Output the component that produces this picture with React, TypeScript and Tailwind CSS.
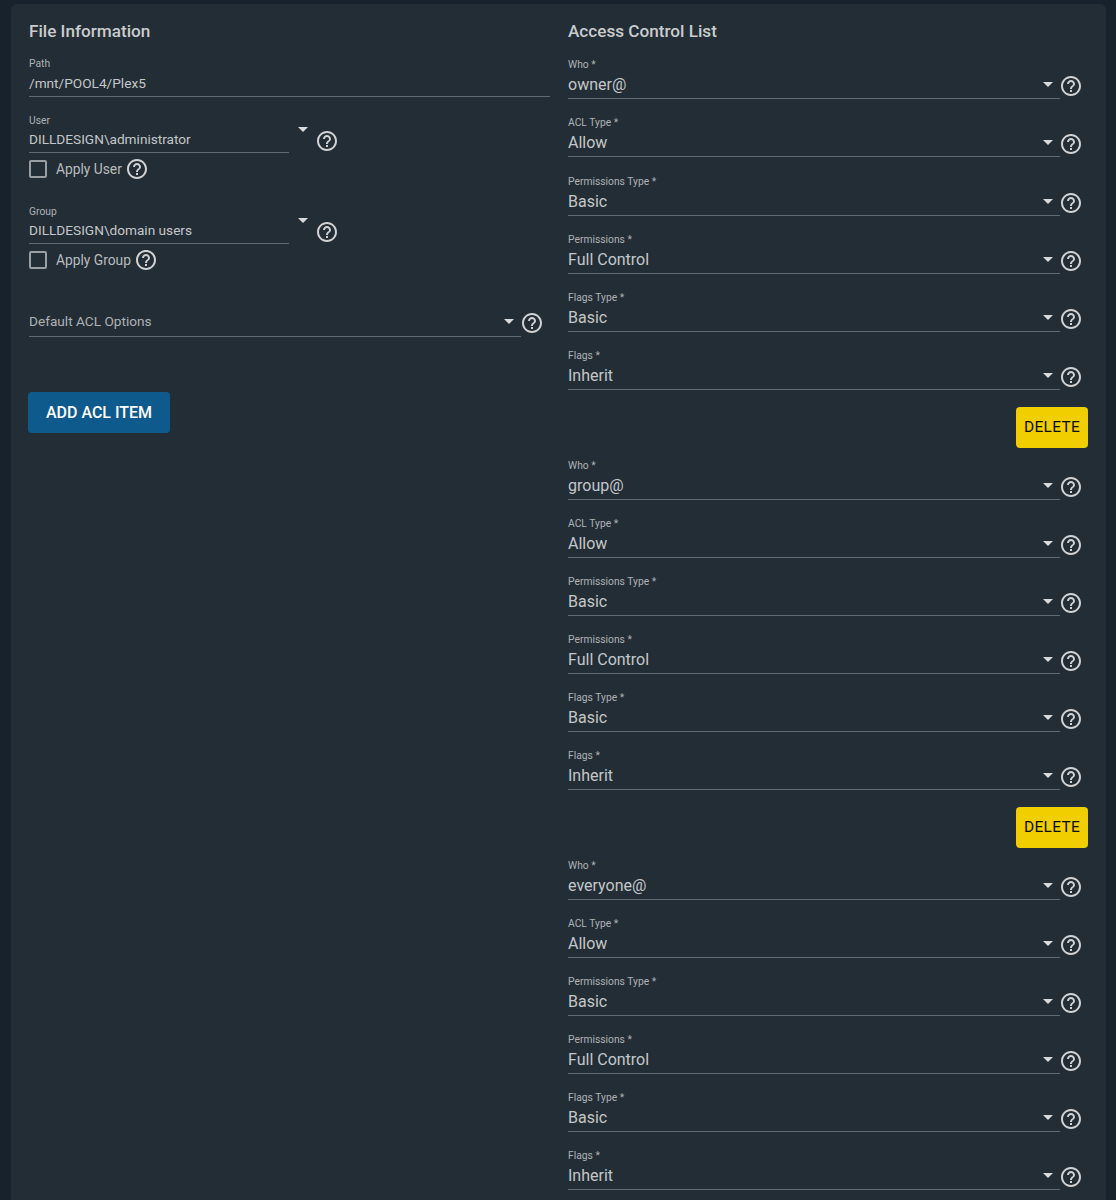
const HELP = "M11 18h2v-2h-2v2zm1-16C6.48 2 2 6.48 2 12s4.48 10 10 10 10-4.48 10-10S17.52 2 12 2zm0 18c-4.41 0-8-3.59-8-8s3.59-8 8-8 8 3.59 8 8-3.59 8-8 8zm0-14c-2.21 0-4 1.79-4 4h2c0-1.1.9-2 2-2s2 .9 2 2c0 2-3 1.75-3 5h2c0-2.25 3-2.5 3-5 0-2.21-1.79-4-4-4z";

function Help({ className = "" }: { className?: string }) {
  return (
    <svg viewBox="0 0 24 24" className={`w-6 h-6 shrink-0 fill-[#d0d2d3] ${className}`}>
      <path d={HELP} />
    </svg>
  );
}

function Caret({ className = "" }: { className?: string }) {
  return <span className={`block w-0 h-0 shrink-0 border-x-[5px] border-x-transparent border-t-[5px] border-t-[#d8dadb] ${className}`} />;
}

function Checkbox({ label }: { label: string }) {
  return (
    <div className="flex items-center mt-[6px] h-[20px]">
      <span className="block w-[18px] h-[18px] rounded-[2px] border-2 border-[#989ea2]" />
      <span className="ml-[9px] text-[13.8px] leading-5 text-[#b9bcbe]">{label}</span>
      <Help className="ml-[3px]" />
    </div>
  );
}

function AclField({ label, value, tall = false }: { label: string; value: string; tall?: boolean }) {
  return (
    <div className={`flex items-start ${tall ? "h-[59px]" : "h-[58px]"}`}>
      <div className="w-[492px] border-b-[1.5px] border-[#5f6a71]">
        <div className="mt-[1px] text-[10.3px] leading-[12px] text-[#aeb2b5]">{label}</div>
        <div className="flex items-center justify-between mt-[4px] pb-[3px] pr-[7px] h-[23px]">
          <span className="text-[16px] leading-5 text-[#c4c7c9]">{value}</span>
          <Caret className="mb-[2px]" />
        </div>
      </div>
      <Help className="mt-[16px] ml-[-1px]" />
    </div>
  );
}

function AclGroup({ who, del = true, first = false }: { who: string; del?: boolean; first?: boolean }) {
  return (
    <div>
      <AclField label="Who *" value={who} />
      <AclField label="ACL Type *" value="Allow" tall={first} />
      <AclField label="Permissions Type *" value="Basic" />
      <AclField label="Permissions *" value="Full Control" />
      <AclField label="Flags Type *" value="Basic" />
      <AclField label="Flags *" value="Inherit" />
      {del && (
        <div className="flex justify-end mb-[11px]">
          <button className="w-[72px] h-[41px] rounded-[4px] bg-[#f0ce00] text-[#0d0c05] text-[15.5px] font-normal tracking-[0.3px]">DELETE</button>
        </div>
      )}
    </div>
  );
}

function UserBlock({ label, value, apply }: { label: string; value: string; apply: string }) {
  return (
    <div className="h-[91px]">
      <div className="flex items-start">
        <div className="w-[260px] border-b-[1.5px] border-[#5f6a71]">
          <div className="mt-[1px] text-[10.3px] leading-[12px] text-[#aeb2b5]">{label}</div>
          <div className="mt-[2px] pb-[3px] text-[13.65px] leading-5 text-[#c4c7c9]">{value}</div>
        </div>
        <Caret className="ml-[9px] mt-[13px]" />
        <Help className="ml-[7px] mt-[15px]" />
      </div>
      <Checkbox label={apply} />
    </div>
  );
}

export default function App() {
  return (
    <div className="h-[1200px] overflow-hidden bg-[#18222d] pt-[4px] pl-[11px] pr-[10px]" style={{ fontFamily: "Roboto, sans-serif" }}>
      <div className="h-full rounded-t-[6px] bg-[#232d35] pt-[15px] pl-[18px] pr-[18px] grid grid-cols-[521px_520px] gap-x-[18px] items-start">
        <section>
          <h2 className="text-[17.15px] leading-6 font-medium text-[#c9cccd] mb-[15px]">File Information</h2>
          <div className="border-b-[1.5px] border-[#5f6a71] mb-[17px]">
            <div className="mt-[1px] text-[10.3px] leading-[12px] text-[#aeb2b5]">Path</div>
            <div className="mt-[3px] pb-[3px] text-[13.65px] leading-5 text-[#c4c7c9]">/mnt/POOL4/Plex5</div>
          </div>
          <UserBlock label="User" value={"DILLDESIGN\\administrator"} apply="Apply User" />
          <UserBlock label="Group" value={"DILLDESIGN\\domain users"} apply="Apply Group" />
          <div className="flex items-start mt-[15px]">
            <div className="w-[492px] flex items-center justify-between pb-[5px] pr-[7px] border-b-[1.5px] border-[#5f6a71]">
              <span className="text-[13.65px] leading-5 text-[#aeb2b5]">Default ACL Options</span>
              <Caret />
            </div>
            <Help className="mt-[0px] ml-[-1px]" />
          </div>
          <button className="mt-[55px] ml-[-1px] w-[142px] h-[41px] rounded-[4px] bg-[#0f5a8c] text-white text-[16px] font-medium">ADD ACL ITEM</button>
        </section>
        <section>
          <h2 className="text-[17.15px] leading-6 font-medium text-[#c9cccd] mb-[15px]">Access Control List</h2>
          <AclGroup who="owner@" first />
          <AclGroup who="group@" />
          <AclGroup who="everyone@" del={false} />
        </section>
      </div>
    </div>
  );
}
